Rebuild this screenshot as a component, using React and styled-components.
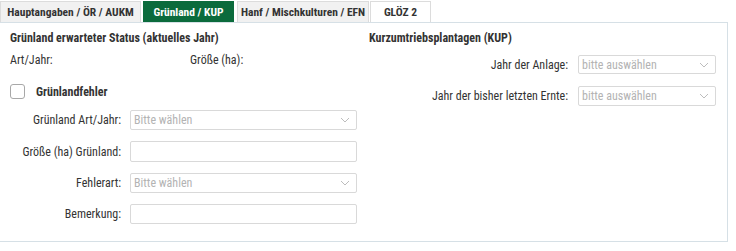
import React from "react";
import styled, { createGlobalStyle } from "styled-components";

const Global = createGlobalStyle`
  html, body { margin: 0; padding: 0; background: #fff; }
  body { font-family: "Roboto Condensed", "Liberation Sans Narrow", Roboto, sans-serif; font-size: 12px; color: #333; }
`;

const Page = styled.div`
  width: 736px;
  height: 251px;
  padding-top: 1px;
  box-sizing: border-box;
`;

const TabBar = styled.div`
  display: flex;
  height: 21px;
`;

const Tab = styled.div`
  display: flex;
  align-items: center;
  justify-content: center;
  box-sizing: border-box;
  width: ${(p) => p.$w}px;
  margin-right: ${(p) => p.$gap || 0}px;
  white-space: nowrap;
  font-weight: 700;
  font-size: 11.5px;
  border: 1px solid ${(p) => (p.$active ? "#0b6b3c" : "#dcdcdc")};
  border-bottom: none;
  background: ${(p) => (p.$active ? "#0b6b3c" : p.$white ? "#fff" : "#f1f1f1")};
  color: ${(p) => (p.$active ? "#fff" : "#333")};
`;

const Panel = styled.div`
  width: 728px;
  height: 220px;
  box-sizing: border-box;
  border: 1px solid #d6e0e6;
  border-left: none;
  display: flex;
  padding: 7px 0 0 10px;
`;

const LeftCol = styled.div`
  width: 359px;
  display: flex;
  flex-direction: column;
`;

const RightCol = styled.div`
  flex: 1;
  display: flex;
  flex-direction: column;
`;

const Heading = styled.div`
  font-weight: 700;
  height: 16px;
  line-height: 16px;
`;

const InfoRow = styled.div`
  display: grid;
  grid-template-columns: 180px auto;
  margin-top: 6px;
  line-height: 16px;
`;

const CheckRow = styled.label`
  display: flex;
  align-items: center;
  gap: 11px;
  margin-top: 16px;
  font-weight: 700;
`;

const Box = styled.span`
  width: 13px;
  height: 13px;
  border: 1px solid #a8a8a8;
  border-radius: 3px;
  background: #fff;
`;

const Form = styled.div`
  display: grid;
  grid-template-columns: ${(p) => p.$cols};
  column-gap: ${(p) => p.$gap}px;
  row-gap: ${(p) => p.$rowGap}px;
  align-items: center;
  margin-top: ${(p) => p.$mt}px;
`;

const Label = styled.div`
  text-align: right;
  color: #333;
`;

const Field = styled.div`
  height: ${(p) => p.$h}px;
  box-sizing: border-box;
  border: 1px solid #d9d9d9;
  border-radius: 2px;
  background: #fff;
  display: flex;
  align-items: center;
  justify-content: space-between;
  padding: 0 6px 0 3px;
  color: #b3b3b3;
`;

const Chevron = () => (
  <svg width="10" height="6" viewBox="0 0 10 6" fill="none">
    <path d="M1 1l4 4 4-4" stroke="#bdbdbd" strokeWidth="1" />
  </svg>
);

const Select = ({ text, h }) => (
  <Field $h={h}>
    <span>{text}</span>
    <Chevron />
  </Field>
);

export default function App() {
  return (
    <Page>
      <Global />
      <TabBar>
        <Tab $w={141} $gap={2}>Hauptangaben / ÖR / AUKM</Tab>
        <Tab $active $w={91} $gap={3}>Grünland / KUP</Tab>
        <Tab $w={132} $gap={1}>Hanf / Mischkulturen / EFN</Tab>
        <Tab $white $w={61}>GLÖZ 2</Tab>
      </TabBar>
      <Panel>
        <LeftCol>
          <Heading>Grünland erwarteter Status (aktuelles Jahr)</Heading>
          <InfoRow>
            <span>Art/Jahr:</span>
            <span>Größe (ha):</span>
          </InfoRow>
          <CheckRow>
            <Box />
            Grünlandfehler
          </CheckRow>
          <Form $cols="111px 227px" $gap={9} $rowGap={11} $mt={11}>
            <Label>Grünland Art/Jahr:</Label>
            <Select text="Bitte wählen" h={20} />
            <Label>Größe (ha) Grünland:</Label>
            <Field $h={21} />
            <Label>Fehlerart:</Label>
            <Select text="Bitte wählen" h={20} />
            <Label>Bemerkung:</Label>
            <Field $h={20} />
          </Form>
        </LeftCol>
        <RightCol>
          <Heading>Kurzumtriebsplantagen (KUP)</Heading>
          <Form $cols="199px 138px" $gap={10} $rowGap={12} $mt={9}>
            <Label>Jahr der Anlage:</Label>
            <Select text="bitte auswählen" h={19} />
            <Label>Jahr der bisher letzten Ernte:</Label>
            <Select text="bitte auswählen" h={20} />
          </Form>
        </RightCol>
      </Panel>
    </Page>
  );
}
